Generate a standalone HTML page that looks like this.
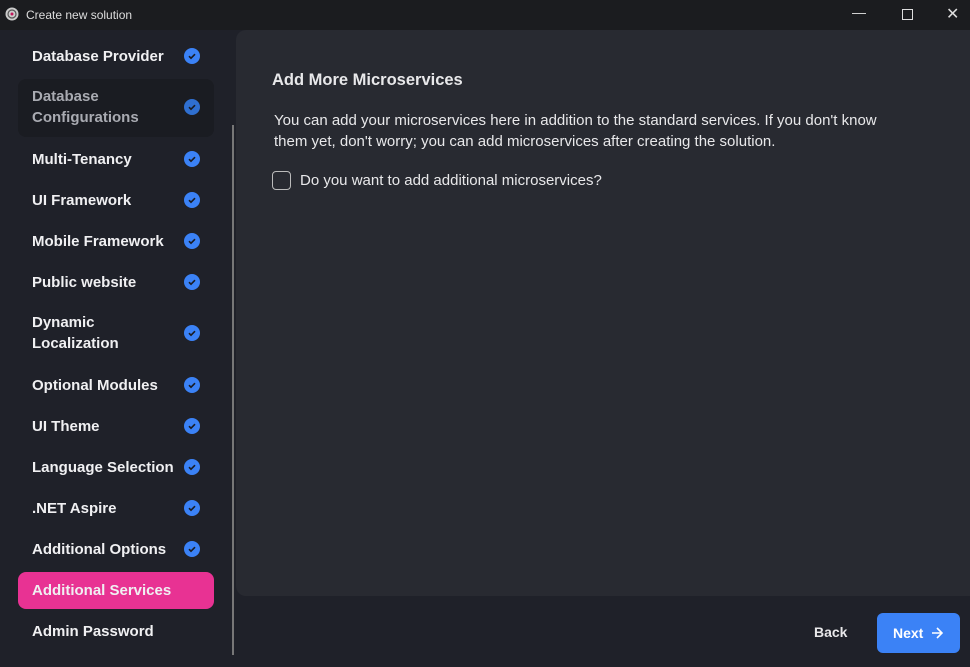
<!DOCTYPE html><html><head><style>
body{margin:0;width:970px;height:667px;background:#1f2129;font-family:"Liberation Sans",sans-serif;overflow:hidden;position:relative;color:#e8e8ea}
.tb{position:absolute;left:0;top:0;width:970px;height:30px;background:#1b1c1f}
.tb span{position:absolute;left:26px;top:8px;font-size:12px;color:#ddd}
.item{position:absolute;left:18px;width:196px;font-size:15px;font-weight:bold;color:#f0f0f2;line-height:21px}
.item .t{position:absolute;left:14px}
.ck{position:absolute;left:166px;width:16px;height:16px;border-radius:50%;background:#3b82f6}
.ck svg{position:absolute;left:0;top:0}
.panel{position:absolute;left:236px;top:30px;width:734px;height:566px;background:#282a31;border-radius:10px 0 0 10px}
</style></head><body>
<div class="tb"><svg style="position:absolute;left:5px;top:7px" width="14" height="14"><circle cx="7" cy="7" r="6.5" fill="#ccc"/><circle cx="7" cy="7" r="4" fill="none" stroke="#555" stroke-width="1.2"/><circle cx="7" cy="7" r="1.5" fill="#c2185b"/></svg><span>Create new solution</span>
<span style="left:852px;top:4px;font-size:14px">—</span>
<div style="position:absolute;left:902px;top:9px;width:9px;height:9px;border:1px solid #ddd"></div>
<span style="left:946px;top:4px;font-size:16px">✕</span></div>
<div style="position:absolute;left:18px;top:79px;width:196px;height:58px;background:#1a1c22;border-radius:8px"></div>
<div style="position:absolute;left:18px;top:572px;width:196px;height:37px;background:#e83293;border-radius:8px"></div>
<div style="position:absolute;left:232px;top:125px;width:2px;height:530px;background:#777"></div>
<div class="panel"></div>
<div id="side"></div>
<div style="position:absolute;left:272px;top:71px;font-size:16.5px;font-weight:bold">Add More Microservices</div>
<div style="position:absolute;left:274px;top:110px;width:630px;font-size:15px;line-height:21px">You can add your microservices here in addition to the standard services. If you don't know them yet, don't worry; you can add microservices after creating the solution.</div>
<div style="position:absolute;left:272px;top:171px;width:17px;height:17px;border:1.5px solid #bbb;border-radius:4px"></div>
<div style="position:absolute;left:300px;top:172px;font-size:15px">Do you want to add additional microservices?</div>
<div style="position:absolute;left:814px;top:624px;font-size:14px;font-weight:bold">Back</div>
<div style="position:absolute;left:877px;top:613px;width:83px;height:40px;background:#3b82f6;border-radius:6px;font-size:14px;font-weight:bold;color:#fff;line-height:40px"><span style="position:absolute;left:16px">Next</span><svg style="position:absolute;left:54px;top:14px" width="12" height="12"><path d="M1 6h10M6 1l5 5-5 5" fill="none" stroke="#fff" stroke-width="1.6"/></svg></div>
<script>
var items=[["Database Provider",56,1],["Database<br>Configurations",107,1,1],["Multi-Tenancy",159,1],["UI Framework",200,1],["Mobile Framework",241,1],["Public website",282,1],["Dynamic<br>Localization",333,1],["Optional Modules",385,1],["UI Theme",426,1],["Language Selection",467,1],[".NET Aspire",508,1],["Additional Options",549,1],["Additional Services",590,0],["Admin Password",631,0]];
var h="";items.forEach(function(i){var two=i[0].indexOf("<br>")>0;var top=i[1]-(two?21:10.5);
h+='<div class="item" style="top:'+top+'px;'+(i[3]?'color:#a9abb2':'')+'"><span class="t">'+i[0]+'</span>'+(i[2]?'<div class="ck" style="top:'+((two?21:10.5)-8)+'px;'+(i[3]?'background:#2f6fd0':'')+'"><svg width="16" height="16"><path d="M5 8.2l2 2 4-4" fill="none" stroke="#1a1c22" stroke-width="1.6"/></svg></div>':'')+'</div>';});
document.getElementById("side").innerHTML=h;
</script>
</body></html>
